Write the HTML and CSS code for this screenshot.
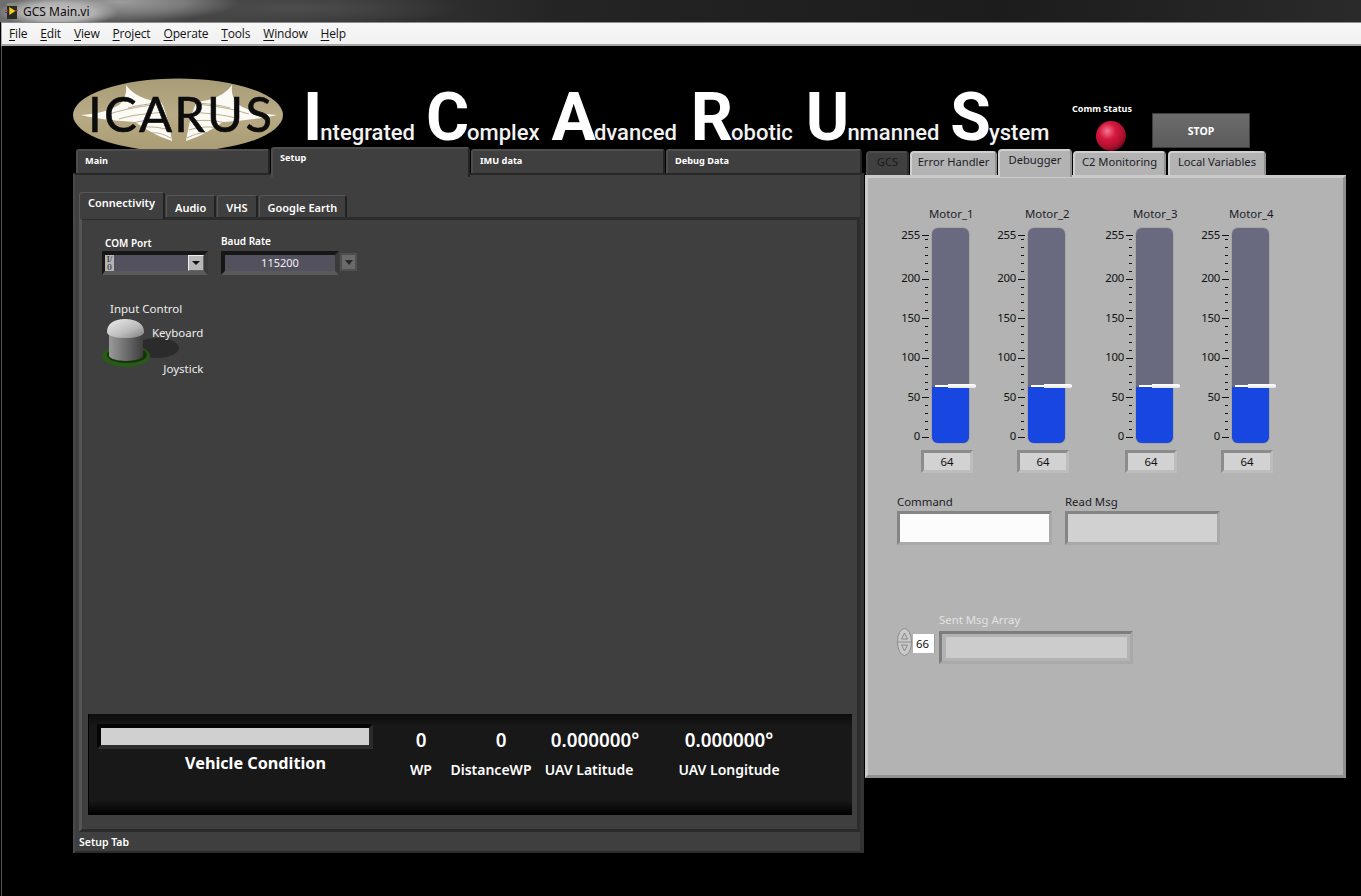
FILE: index.html
```html
<!DOCTYPE html>
<html lang="en">
<head>
<meta charset="utf-8">
<title>GCS Main.vi</title>
<link rel="stylesheet" href="styles.css">
</head>
<body>
<svg class="defs" width="0" height="0" aria-hidden="true">
  <symbol id="ticks" viewBox="0 0 12 220">
    <path d="M2 10.5h7M5 14.5h3M5 22.5h3M5 30.5h3M5 38.5h3M5 46.5h3M2 54.5h7M5 62.5h3M5 69.5h3M5 77.5h3M5 85.5h3M2 93.5h7M5 101.5h3M5 109.5h3M5 117.5h3M5 125.5h3M2 133.5h7M5 141.5h3M5 149.5h3M5 157.5h3M5 164.5h3M2 172.5h7M5 180.5h3M5 188.5h3M5 196.5h3M5 204.5h3M2 212.5h7" stroke="#111" stroke-width="1" fill="none" shape-rendering="crispEdges"/>
  </symbol>
</svg>

<div class="titlebar">
  <svg class="app-icon" width="13" height="16" viewBox="0 0 13 16">
    <rect x="2" y="0" width="10" height="16" fill="#2b2b22"/>
    <rect x="2" y="0" width="10" height="3" fill="#8a8a80"/>
    <path d="M0 7.5h3M10 7.5h3" stroke="#d8261c" stroke-width="1"/>
    <path d="M0 9.5h3" stroke="#2a3fd0" stroke-width="1"/>
    <path d="M4 3.5l7 4.5-7 4.5z" fill="#f0d020" stroke="#111" stroke-width=".5"/>
  </svg>
  <span class="title-text">GCS Main.vi</span>
</div>

<nav class="menubar">
  <span class="menu"><u>F</u>ile</span>
  <span class="menu"><u>E</u>dit</span>
  <span class="menu"><u>V</u>iew</span>
  <span class="menu"><u>P</u>roject</span>
  <span class="menu"><u>O</u>perate</span>
  <span class="menu"><u>T</u>ools</span>
  <span class="menu"><u>W</u>indow</span>
  <span class="menu"><u>H</u>elp</span>
</nav>

<main class="panel-root">
  <header class="banner">
    <svg class="logo" width="210" height="74" viewBox="0 0 210 74">
      <defs>
        <linearGradient id="tan" x1="0" y1="0" x2="0" y2="1">
          <stop offset="0" stop-color="#a89c76"/>
          <stop offset=".5" stop-color="#b8ab85"/>
          <stop offset="1" stop-color="#a99c74"/>
        </linearGradient>
        <g id="wing">
          <path d="M8 37C25 36 38 32 46 27 52 22 54 14 53 7 60 17 72 22 88 24 92 30 96 45 99 63 84 58 72 51 62 44 45 43 25 41 8 37Z" fill="#fbfaf5"/>
          <path d="M36 36C56 30 70 28 88 26M46 41C62 36 76 36 91 34M60 45C70 42 82 42 94 43M68 50C76 48 86 49 96 52M78 55C84 54 90 56 98 60M55 30C65 27 76 26 86 25" stroke="#a89c76" stroke-width=".8" fill="none"/>
        </g>
      </defs>
      <ellipse cx="105" cy="37" rx="105" ry="36.5" fill="url(#tan)"/>
      <use href="#wing"/>
      <use href="#wing" transform="translate(212 0) scale(-1 1)"/>
      <text class="logo-text" x="15" y="54" textLength="184" lengthAdjust="spacing">ICARUS</text>
    </svg>
    <h1 class="acronym">
      <span class="word w-i"><b>I</b>ntegrated</span>
      <span class="word w-c"><b>C</b>omplex</span>
      <span class="word w-a"><b>A</b>dvanced</span>
      <span class="word w-r"><b>R</b>obotic</span>
      <span class="word w-u"><b>U</b>nmanned</span>
      <span class="word w-s"><b>S</b>ystem</span>
    </h1>
    <div class="comm">
      <span class="comm-label">Comm Status</span>
      <span class="led"></span>
    </div>
    <button class="stop" type="button">STOP</button>
  </header>

  <div class="columns">
    <section class="left">
      <div class="dark-tabs">
        <span class="dtab dtab-main">Main</span>
        <span class="dtab dtab-setup">Setup</span>
        <span class="dtab dtab-imu">IMU data</span>
        <span class="dtab dtab-debug">Debug Data</span>
      </div>
      <div class="left-panel">
        <div class="inner-wrap">
          <div class="sub-tabs">
            <span class="stab stab-on">Connectivity</span>
            <span class="stab">Audio</span>
            <span class="stab">VHS</span>
            <span class="stab">Google Earth</span>
          </div>
          <div class="sub-page">
            <div class="serial-row">
              <div class="field field-com">
                <label class="blabel">COM Port</label>
                <div class="ctl ctl-com">
                  <span class="io-tag">I/<br>0</span>
                  <span class="drop"></span>
                </div>
              </div>
              <div class="field field-baud">
                <label class="blabel">Baud Rate</label>
                <div class="baud-line">
                  <div class="ctl ctl-baud">115200</div>
                  <span class="drop2"></span>
                </div>
              </div>
            </div>
            <div class="input-ctl">
              <span class="ic-label">Input Control</span>
              <div class="toggle-row">
                <svg class="knob" width="84" height="52" viewBox="0 0 84 52">
                  <defs>
                    <linearGradient id="cyl" x1="0" y1="0" x2="1" y2="0">
                      <stop offset="0" stop-color="#9a9a9a"/>
                      <stop offset=".35" stop-color="#7b7b7b"/>
                      <stop offset="1" stop-color="#3e3e3e"/>
                    </linearGradient>
                    <linearGradient id="dome" x1="0" y1="0" x2="1" y2="1">
                      <stop offset="0" stop-color="#eee"/>
                      <stop offset=".6" stop-color="#bbb"/>
                      <stop offset="1" stop-color="#7c7c7c"/>
                    </linearGradient>
                  </defs>
                  <ellipse cx="56" cy="29" rx="22" ry="10" fill="#2b2b2b"/>
                  <ellipse cx="25" cy="37" rx="24" ry="11" fill="#275a17"/>
                  <ellipse cx="26" cy="36" rx="20" ry="8" fill="#17330c"/>
                  <path d="M8 11V37C10 43 38 44 42 37V11Z" fill="url(#cyl)"/>
                  <path d="M6 13C6 3 16 0 24 0S43 3 43 13C43 21 6 21 6 13Z" fill="url(#dome)"/>
                </svg>
                <div class="toggle-labels">
                  <span class="opt-k">Keyboard</span>
                  <span class="opt-j">Joystick</span>
                </div>
              </div>
            </div>
            <div class="cluster">
              <div class="cond">
                <div class="cond-box"></div>
                <span class="cond-label">Vehicle Condition</span>
              </div>
              <div class="stat stat-wp"><span class="val">0</span><span class="cap">WP</span></div>
              <div class="stat stat-dist"><span class="val val-d">0</span><span class="cap">DistanceWP</span></div>
              <div class="stat stat-lat"><span class="val val-l">0.000000°</span><span class="cap">UAV Latitude</span></div>
              <div class="stat stat-lon"><span class="val">0.000000°</span><span class="cap">UAV Longitude</span></div>
            </div>
          </div>
        </div>
        <div class="status">Setup Tab</div>
      </div>
    </section>

    <section class="right">
      <div class="light-tabs">
        <span class="ltab ltab-gcs">GCS</span>
        <span class="ltab ltab-err">Error Handler</span>
        <span class="ltab ltab-on">Debugger</span>
        <span class="ltab ltab-c2">C2 Monitoring</span>
        <span class="ltab ltab-lv">Local Variables</span>
      </div>
      <div class="right-panel">
        <div class="motors">
          <div class="motor">
            <span class="m-name">Motor_1</span>
            <div class="gauge">
              <div class="scale"><span class="sv sv-top">255</span><span class="sv">200</span><span class="sv">150</span><span class="sv">100</span><span class="sv">50</span><span class="sv">0</span></div>
              <svg class="ticks" width="12" height="220"><use href="#ticks"/></svg>
              <div class="bar"><span class="fill"></span><span class="handle"></span></div>
            </div>
            <div class="digital">64</div>
          </div>
          <div class="motor">
            <span class="m-name">Motor_2</span>
            <div class="gauge">
              <div class="scale"><span class="sv sv-top">255</span><span class="sv">200</span><span class="sv">150</span><span class="sv">100</span><span class="sv">50</span><span class="sv">0</span></div>
              <svg class="ticks" width="12" height="220"><use href="#ticks"/></svg>
              <div class="bar"><span class="fill"></span><span class="handle"></span></div>
            </div>
            <div class="digital">64</div>
          </div>
          <div class="motor motor-3">
            <span class="m-name">Motor_3</span>
            <div class="gauge">
              <div class="scale"><span class="sv sv-top">255</span><span class="sv">200</span><span class="sv">150</span><span class="sv">100</span><span class="sv">50</span><span class="sv">0</span></div>
              <svg class="ticks" width="12" height="220"><use href="#ticks"/></svg>
              <div class="bar"><span class="fill"></span><span class="handle"></span></div>
            </div>
            <div class="digital">64</div>
          </div>
          <div class="motor">
            <span class="m-name">Motor_4</span>
            <div class="gauge">
              <div class="scale"><span class="sv sv-top">255</span><span class="sv">200</span><span class="sv">150</span><span class="sv">100</span><span class="sv">50</span><span class="sv">0</span></div>
              <svg class="ticks" width="12" height="220"><use href="#ticks"/></svg>
              <div class="bar"><span class="fill"></span><span class="handle"></span></div>
            </div>
            <div class="digital">64</div>
          </div>
        </div>

        <div class="msgs">
          <div class="msg">
            <span class="msg-label">Command</span>
            <div class="msg-box msg-white"></div>
          </div>
          <div class="msg">
            <span class="msg-label">Read Msg</span>
            <div class="msg-box"></div>
          </div>
        </div>

        <div class="sent">
          <div class="index">
            <svg class="spin" width="15" height="28" viewBox="0 0 15 28">
              <ellipse cx="7.5" cy="14" rx="7" ry="13.5" fill="#c9c9c9" stroke="#8c8c8c"/>
              <path d="M1 14h13" stroke="#8c8c8c"/>
              <path d="M7.5 5l-3 6h6zM7.5 23l-3-6h6z" fill="none" stroke="#888"/>
            </svg>
            <div class="idx-box">66</div>
          </div>
          <div class="sent-main">
            <span class="sent-label">Sent Msg Array</span>
            <div class="sent-frame"><div class="sent-inner"></div></div>
          </div>
        </div>
      </div>
    </section>
  </div>
</main>
</body>
</html>
```

FILE: styles.css
```css
* { box-sizing: border-box; }
html, body { margin: 0; padding: 0; }
body {
  width: 1361px;
  height: 896px;
  overflow: hidden;
  background: #000;
  font-family: "Noto Sans", "Open Sans", sans-serif;
  font-size: 11.4px;
  color: #fff;
}
.defs { display: block; height: 0; }

/* window chrome */
.titlebar {
  height: 22px;
  display: flex;
  align-items: center;
  gap: 5px;
  padding-left: 5px;
  background:
    radial-gradient(ellipse 60px 15px at 58px 12px, #c4c4c4 0%, #b0b0b0 60%, rgba(150,150,150,0) 100%),
    radial-gradient(ellipse 120px 20px at 120px 2px, #9c9c9c 0%, #7a7a7a 55%, rgba(90,90,90,0) 100%),
    radial-gradient(ellipse 170px 18px at 290px 8px, #4d4d4d 0%, rgba(50,50,50,0) 100%),
    linear-gradient(90deg, #6e6e6e 0, #444 190px, #242424 560px, #1c1c1c 1000px, #2a2a2a 1361px);
}
.app-icon { flex: none; }
.title-text { font-size: 12px; color: #0c0c0c; }
.menubar {
  height: 24px;
  display: flex;
  align-items: center;
  gap: 13px;
  margin-left: 1px;
  padding-left: 7px;
  background: linear-gradient(#f7f7f7, #f1f1f1);
  border-top: 1px solid #8d8d8d;
  border-bottom: 2px solid #a5a5a5;
  border-left: 1px solid #aaa;
}
.menu { font-family: "Open Sans", sans-serif; font-size: 12px; letter-spacing: -.17px; color: #111; }
.menu u { text-underline-offset: 2px; }

.panel-root { border-left: 1px solid #555; margin-left: 1px; height: 850px; }

/* banner */
.banner {
  height: 103px;
  display: flex;
  align-items: flex-start;
  padding-left: 71px;
}
.logo { flex: none; margin-top: 32px; }
.logo-text {
  font-family: Lato, "Open Sans", sans-serif;
  font-weight: 400;
  font-size: 49px;
  fill: #0c0c0c;
  stroke: #0c0c0c;
  stroke-width: .6px;
}
.acronym {
  flex: none;
  width: 747px;
  margin: 0 0 0 20px;
  display: flex;
  align-items: baseline;
  height: 98px;
  padding-top: 42px;
  font: 500 22px/1 Roboto, "Open Sans", sans-serif;
  color: #f2f2f2;
  white-space: nowrap;
}
.word b { font-size: 66px; font-weight: 700; line-height: 60px; color: #fff; letter-spacing: -2px; }
.w-c { margin-left: 11px; }
.w-a { margin-left: 12px; }
.w-r { margin-left: 14px; }
.w-u { margin-left: 13px; }
.w-s { margin-left: 11px; }

.comm {
  width: 60px;
  margin-left: 22px;
  padding-top: 57px;
  display: flex;
  flex-direction: column;
  align-items: center;
  flex: none;
}
.comm-label { font-size: 9px; font-weight: 700; line-height: 12px; white-space: nowrap; }
.led {
  width: 30px;
  height: 30px;
  margin-top: 6px;
  margin-left: 18px;
  border-radius: 50%;
  background: radial-gradient(circle at 38% 34%, #f07a90 0, #d8183f 30%, #a80f2c 62%, #5a0a18 78%, #1c1c1c 92%, #000 100%);
}
.stop {
  flex: none;
  width: 98px;
  height: 35px;
  margin: 67px 0 0 20px;
  border: 1px solid #3d3d3d;
  background: linear-gradient(#6c6c6c, #5c5c5c);
  color: #fff;
  font: 700 10.5px "Noto Sans", sans-serif;
}

.columns { display: flex; align-items: flex-start; padding-left: 71px; }

/* left tab control */
.left { width: 791px; flex: none; }
.dark-tabs { display: flex; height: 24px; align-items: flex-end; padding-left: 3px; position: relative; z-index: 2; }
.dtab {
  font-size: 9.2px;
  font-weight: 700;
  background: #3f3f3f;
  border: 2px solid #4d4d4d;
  border-bottom: 0;
  border-right-color: #232323;
  border-radius: 3px 3px 0 0;
  padding: 3px 0 0 7px;
  height: 24px;
  margin-right: 1px;
}
.dtab-main { width: 194px; }
.dtab-setup { width: 199px; height: 30px; margin-bottom: -4px; padding-top: 2px; }
.dtab-imu { width: 194px; }
.dtab-debug { width: 196px; }
.left-panel {
  height: 680px;
  display: flex;
  flex-direction: column;
  background: #3f3f3f;
  border: 2px solid #484848;
  border-right: 4px solid #333;
  border-bottom: 0;
  border-top-color: #272727;
  box-shadow: inset 0 -2px 0 #2b2b2b;
}
.inner-wrap { flex: 1; padding: 17px 0 0 4px; }
.sub-tabs { display: flex; align-items: flex-end; height: 25px; position: relative; z-index: 1; }
.stab {
  height: 22px;
  padding: 4px 8px 0;
  font-size: 11px;
  font-weight: 600;
  background: #3f3f3f;
  border-top: 1px solid #575757;
  border-left: 1px solid #575757;
  border-right: 2px solid #222;
  border-radius: 3px 3px 0 0;
  margin-right: 1px;
}
.stab-on { height: 27px; padding: 2px 8px 0; margin-bottom: -2px; }
.sub-page {
  height: 615px;
  display: flex;
  flex-direction: column;
  border: 3px solid;
  border-color: #2c2c2c #2c2c2c #2a2a2a #555;
  padding: 0 5px 14px 6px;
}

.serial-row { display: flex; padding: 16px 0 0 14px; height: 56px; }
.field { display: flex; flex-direction: column; }
.field-com { width: 119px; padding-top: 2px; }
.field-baud { margin-top: -1px; }
.blabel { font-size: 10px; font-weight: 600; line-height: 13px; }
.field-com .blabel { margin-left: 3px; margin-top: -1px; margin-bottom: 1px; }
.field-baud .blabel { margin-bottom: 3px; }
.ctl {
  height: 24px;
  background: #54515e;
  border: 4px solid;
  border-color: #161616 #3a3a3a #5a5a5a #161616;
  font-size: 11px;
  color: #f0f0f0;
}
.ctl-com { width: 106px; display: flex; align-items: center; justify-content: space-between; border-width: 4px 4px 4px 3px; }
.io-tag {
  width: 9px;
  height: 16px;
  background: #b4b4b4;
  color: #111;
  font: 9px/8px "Liberation Serif", serif;
  text-align: center;
}
.drop {
  width: 16px;
  height: 16px;
  background: #b8b8b8;
  border: 1px solid #eee;
  border-right-color: #666;
  border-bottom-color: #666;
  display: flex;
  align-items: center;
  justify-content: center;
}
.drop::after { content: ""; border: 4px solid transparent; border-top: 4px solid #111; border-bottom: 0; }
.baud-line { display: flex; align-items: flex-start; gap: 1px; }
.ctl-baud { width: 118px; text-align: center; line-height: 16px; }
.drop2 {
  width: 17px;
  height: 18px;
  margin-top: 2px;
  background: #6a6a6a;
  border: 2px solid #505050;
  display: flex;
  align-items: center;
  justify-content: center;
}
.drop2::after { content: ""; border: 4px solid transparent; border-top: 5px solid #2a2a2a; border-bottom: 0; }

.input-ctl { padding: 25px 0 0 13px; height: 106px; }
.ic-label { display: block; margin-left: 9px; font-size: 11.5px; line-height: 16px; color: #eee; }
.toggle-row { display: flex; margin-top: 1px; }
.knob { flex: none; margin-top: 1px; }
.toggle-labels { display: flex; flex-direction: column; align-items: flex-end; margin-left: -33px; margin-top: 7px; gap: 20px; position: relative; }
.toggle-labels span { line-height: 16px; font-size: 11.5px; color: #eee; }

.cluster {
  margin-top: auto;
  height: 101px;
  display: flex;
  position: relative;
  background: linear-gradient(#0c0c0c 0, #181818 12px, #181818 86px, #000 100%);
  border: solid #000;
  border-width: 0 0 0 1px;
}
.cond { width: 309px; flex: none; padding: 10px 0 0 8px; display: flex; flex-direction: column; }
.cond-box {
  width: 276px;
  height: 25px;
  background: #d0d0d0;
  border: 4px solid;
  border-color: #050505 #2a2a2a #2c2c2c #050505;
}
.cond-label { font-size: 16.2px; font-weight: 700; line-height: 24px; margin-top: 2px; text-align: center; padding-left: 16px; }
.stat { flex: none; display: flex; flex-direction: column; align-items: center; padding-top: 13px; white-space: nowrap; }
.val { font-size: 18.8px; font-weight: 600; line-height: 26px; }
.val-d { padding-left: 20px; }
.val-l { padding-left: 12px; }
.cap { font-size: 14px; font-weight: 600; line-height: 18px; margin-top: 8px; }
.stat-wp { width: 46px; }
.stat-dist { width: 82px; margin-left: 6px; }
.stat-lat { width: 90px; margin-left: 12px; }
.stat-lon { width: 102px; margin-left: 44px; }

.status { height: 20px; padding-left: 4px; font-size: 10.5px; font-weight: 600; line-height: 18px; }

/* right tab control */
.right { width: 481px; margin-left: 1px; flex: none; }
.light-tabs { display: flex; height: 26px; align-items: flex-end; padding-left: 1px; position: relative; z-index: 2; }
.ltab {
  height: 24px;
  font-size: 11.2px;
  line-height: 18px;
  text-align: center;
  color: #1c1c28;
  background: #b3b3b3;
  border: 2px solid #cfcfcf;
  border-bottom: 0;
  border-right-color: #8f8f8f;
  border-radius: 4px 4px 0 0;
  margin-right: 1px;
}
.ltab-gcs { width: 43px; background: #404040; border-color: #4c4c4c #2d2d2d #4c4c4c #4c4c4c; color: #1a1a1a; }
.ltab-err { width: 87px; }
.ltab-on { width: 74px; height: 28px; margin-bottom: -2px; }
.ltab-c2 { width: 93px; }
.ltab-lv { width: 98px; margin-left: 1px; }
.right-panel {
  height: 603px;
  background: #b3b3b3;
  border: 3px solid;
  border-color: #cbcbcb #8f8f8f #8f8f8f #cbcbcb;
  padding: 28px 0 0 28px;
  color: #1c1c28;
}

.motors { display: flex; gap: 16px; }
.motor { flex: none; width: 80px; display: flex; flex-direction: column; }
.motor-3 { margin-left: 12px; }
.m-name { height: 16px; line-height: 16px; padding-left: 33px; white-space: nowrap; }
.gauge { display: flex; margin-top: 6px; height: 215px; }
.scale { width: 24px; display: flex; flex-direction: column; align-items: flex-end; color: #111; letter-spacing: -.3px; }
.sv { height: 39.6px; line-height: 14px; flex: none; }
.sv-top { height: 43px; }
.ticks { flex: none; margin-top: -3px; }
.bar {
  position: relative;
  width: 37px;
  height: 215px;
  background: #69697f;
  border-radius: 6px;
  box-shadow: 0 0 0 1px #a5a5a5;
}
.fill { position: absolute; left: 0; right: 0; bottom: 0; height: 56px; background: #1747e0; border-radius: 0 0 6px 6px; }
.handle {
  position: absolute;
  left: 3px;
  top: 157px;
  width: 41px;
  height: 2px;
  background: #fff;
}
.handle::after {
  content: "";
  position: absolute;
  right: 0;
  top: -1px;
  width: 28px;
  height: 4px;
  background: linear-gradient(#fff, #e6e6e6);
  border-radius: 0 2px 2px 0;
}
.digital {
  width: 52px;
  height: 23px;
  margin: 7px 0 0 25px;
  background: #d2d2d2;
  border: 3px solid;
  border-color: #8c8c8c #bdbdbd #bdbdbd #8c8c8c;
  text-align: center;
  line-height: 17px;
  color: #111;
}

.msgs { display: flex; gap: 13px; margin: 22px 0 0 1px; }
.msg { display: flex; flex-direction: column; width: 155px; }
.msg-label { line-height: 14px; margin-bottom: 2px; color: #1c1c28; }
.msg-box {
  height: 34px;
  background: #d1d1d1;
  border: 3px solid;
  border-color: #858585 #a9a9a9 #a9a9a9 #858585;
}
.msg-white { background: #fcfcfc; }

.sent { display: flex; align-items: flex-start; margin: 68px 0 0 1px; }
.index { display: flex; align-items: flex-start; width: 42px; padding-top: 15px; }
.spin { flex: none; }
.idx-box {
  width: 22px;
  height: 19px;
  margin: 6px 0 0 1px;
  padding-left: 3px;
  background: #fff;
  color: #111;
  line-height: 19px;
  border-right: 1px solid #a0a0a0;
}
.sent-main { display: flex; flex-direction: column; }
.sent-label { line-height: 14px; margin-bottom: 4px; color: #e2e2e2; }
.sent-frame {
  width: 194px;
  height: 33px;
  padding: 3px 3px 3px 4px;
  border: 3px solid;
  border-color: #7d7d7d #a9a9a9 #a9a9a9 #7d7d7d;
}
.sent-inner { height: 100%; background: #cccccc; }
```
